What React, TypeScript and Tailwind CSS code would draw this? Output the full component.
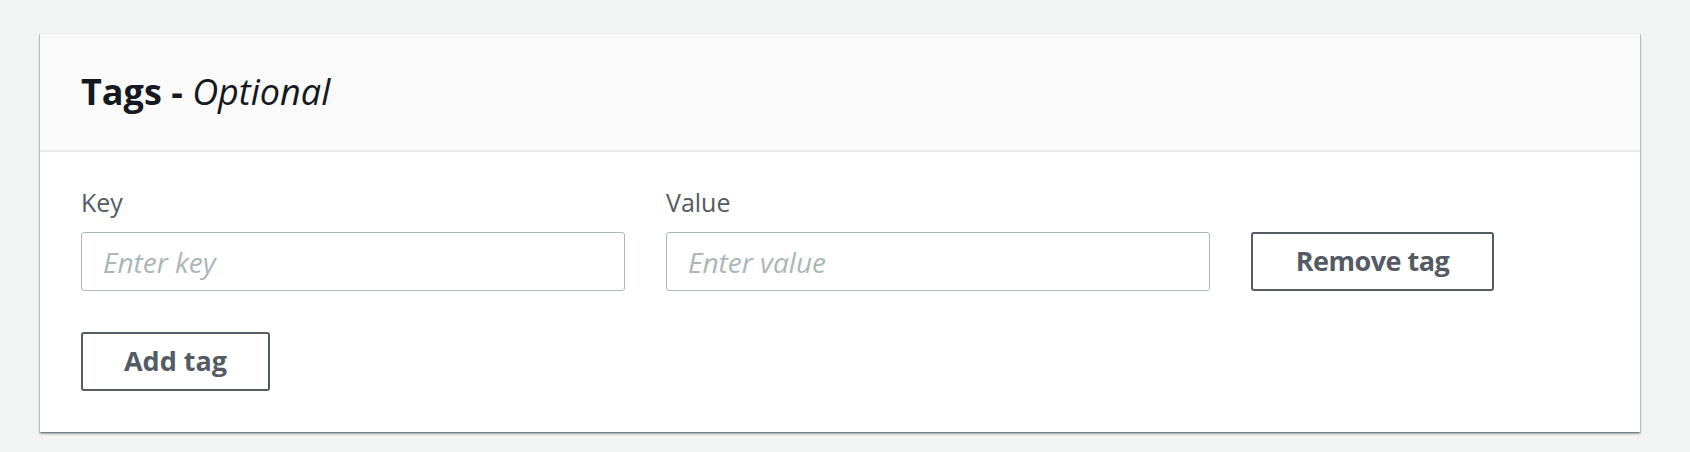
import { useState } from "react";

type Tag = { key: string; value: string };

const FONT = "font-['Open_Sans','Noto_Sans',sans-serif]";

export default function App() {
  const [tags, setTags] = useState<Tag[]>([{ key: "", value: "" }]);

  const update = (i: number, patch: Partial<Tag>) =>
    setTags((t) => t.map((tag, idx) => (idx === i ? { ...tag, ...patch } : tag)));

  return (
    <div className={`min-h-[452px] bg-[#f2f3f3] pt-[33px] pl-[40px] ${FONT}`}>
      <div className="w-[1600px] border-t border-[#eaeded] bg-white shadow-[0_2px_2px_0_rgba(0,28,36,0.35),1px_1px_1px_0_rgba(0,28,36,0.15),-1px_1px_1px_0_rgba(0,28,36,0.15)]">
        {/* Header */}
        <div className="border-b-2 border-[#eaeded] bg-[#fafafa] px-[41px] pt-[34px] pb-[34px]">
          <h2 className="text-[36px] leading-[48px] font-bold text-[#16191f]">
            Tags - <i className="font-medium">Optional</i>
          </h2>
        </div>

        {/* Body */}
        <div className="px-[41px] pt-[32px] pb-[41px]">
          {tags.map((tag, i) => (
            <div key={i} className="flex items-end gap-x-[41px]">
              <label className="flex w-[544px] flex-col gap-[12px]">
                <span className="text-[25px] leading-[36px] text-[#545b64]">Key</span>
                <input
                  value={tag.key}
                  onChange={(e) => update(i, { key: e.target.value })}
                  placeholder="Enter key"
                  className="h-[59px] rounded-[3px] border border-[#aab7b8] bg-white px-[21px] text-[28px] text-[#16191f] outline-none placeholder:italic placeholder:text-[#aab7b8]"
                />
              </label>
              <label className="flex w-[544px] flex-col gap-[12px]">
                <span className="text-[25px] leading-[36px] text-[#545b64]">Value</span>
                <input
                  value={tag.value}
                  onChange={(e) => update(i, { value: e.target.value })}
                  placeholder="Enter value"
                  className="h-[59px] rounded-[3px] border border-[#aab7b8] bg-white px-[21px] text-[28px] text-[#16191f] outline-none placeholder:italic placeholder:text-[#aab7b8]"
                />
              </label>
              <button
                type="button"
                onClick={() => setTags((t) => t.filter((_, idx) => idx !== i))}
                className="h-[59px] w-[243px] rounded-[3px] border-2 border-[#545b64] bg-white text-[27px] font-bold tracking-[-0.5px] text-[#545b64]"
              >
                Remove tag
              </button>
            </div>
          ))}

          <button
            type="button"
            onClick={() => setTags((t) => [...t, { key: "", value: "" }])}
            className="mt-[41px] h-[59px] w-[189px] rounded-[3px] border-2 border-[#545b64] bg-white text-[27px] font-bold text-[#545b64]"
          >
            Add tag
          </button>
        </div>
      </div>
    </div>
  );
}
